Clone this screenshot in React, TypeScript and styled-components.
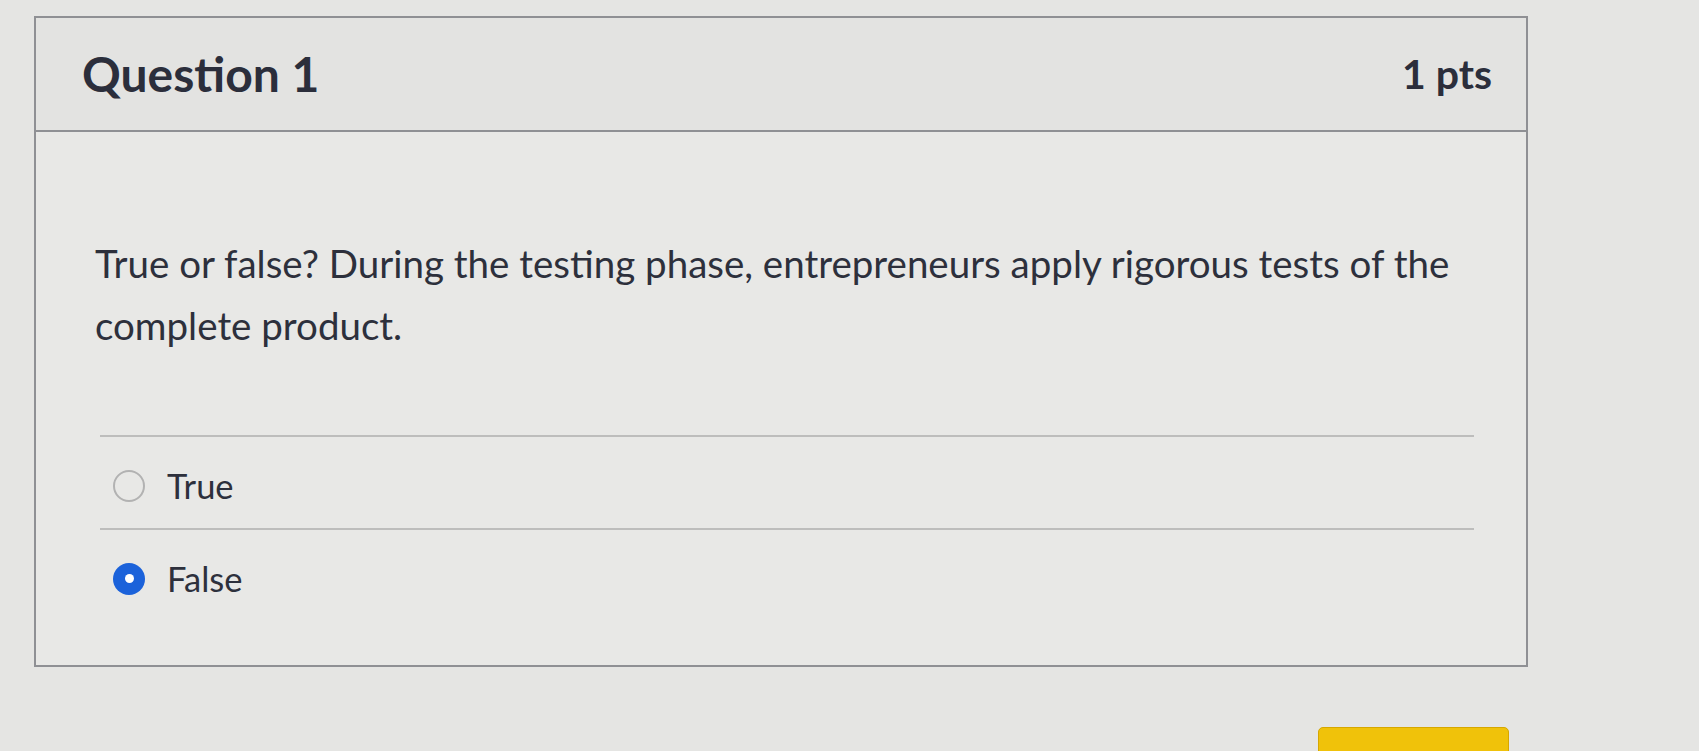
import React from "react";
import styled, { createGlobalStyle } from "styled-components";

const GlobalStyle = createGlobalStyle`
  html, body {
    margin: 0;
    padding: 0;
    overflow: hidden;
    background: #e5e5e3;
    font-family: Lato, "Open Sans", "Liberation Sans", sans-serif;
  }
`;

const Page = styled.div`
  display: flex;
  flex-direction: column;
  padding: 16px 0 0 34px;
  width: 1699px;
  height: 751px;
  box-sizing: border-box;
`;

const Card = styled.section`
  width: 1494px;
  box-sizing: border-box;
  border: 2px solid #8f9094;
  background: #e8e8e6;
`;

const CardHeader = styled.header`
  display: flex;
  align-items: center;
  justify-content: space-between;
  height: 112px;
  padding: 0 34px 0 46px;
  border-bottom: 2px solid #8f9094;
  background: #e3e3e1;
`;

const HeaderText = styled.h2<{ $small?: boolean }>`
  margin: 0;
  font-size: ${(p) => (p.$small ? "41px" : "48px")};
  font-weight: 700;
  line-height: 1.2;
  color: #2b2e3b;
`;

const CardBody = styled.div`
  padding: 100px 52px 44px 59px;
`;

const QuestionText = styled.p`
  margin: 0;
  font-size: 38.5px;
  line-height: 62px;
  color: #2d303c;
`;

const Answers = styled.div`
  margin: 79px 0 0 5px;
  display: flex;
  flex-direction: column;
`;

const AnswerRow = styled.label`
  display: flex;
  align-items: center;
  gap: 22px;
  height: 93px;
  box-sizing: border-box;
  padding: 6px 0 0 13px;
  border-top: 2px solid #bdbdbc;
`;

const Radio = styled.span<{ $checked?: boolean }>`
  flex: none;
  width: 32px;
  height: 32px;
  box-sizing: border-box;
  border-radius: 50%;
  display: flex;
  align-items: center;
  justify-content: center;
  border: ${(p) => (p.$checked ? "none" : "2px solid #b2b2b2")};
  background: ${(p) => (p.$checked ? "#1b62da" : "transparent")};
  &::after {
    content: "";
    display: ${(p) => (p.$checked ? "block" : "none")};
    width: 9px;
    height: 9px;
    border-radius: 50%;
    background: #ffffff;
  }
`;

const AnswerText = styled.span`
  font-size: 34.5px;
  color: #2d303c;
`;

const Footer = styled.div`
  display: flex;
  justify-content: flex-end;
  width: 1494px;
  box-sizing: border-box;
  padding-right: 19px;
  margin-top: 60px;
`;

const NextButton = styled.button`
  width: 191px;
  height: 44px;
  border: 1px solid #d6a700;
  border-radius: 5px;
  background: #f0c20a;
`;

export default function App() {
  return (
    <>
      <GlobalStyle />
      <Page>
        <Card>
          <CardHeader>
            <HeaderText>Question 1</HeaderText>
            <HeaderText $small>1 pts</HeaderText>
          </CardHeader>
          <CardBody>
            <QuestionText>
              True or false? During the testing phase, entrepreneurs apply rigorous tests of the
              complete product.
            </QuestionText>
            <Answers>
              <AnswerRow>
                <Radio />
                <AnswerText>True</AnswerText>
              </AnswerRow>
              <AnswerRow>
                <Radio $checked />
                <AnswerText>False</AnswerText>
              </AnswerRow>
            </Answers>
          </CardBody>
        </Card>
        <Footer>
          <NextButton aria-label="Next" />
        </Footer>
      </Page>
    </>
  );
}
